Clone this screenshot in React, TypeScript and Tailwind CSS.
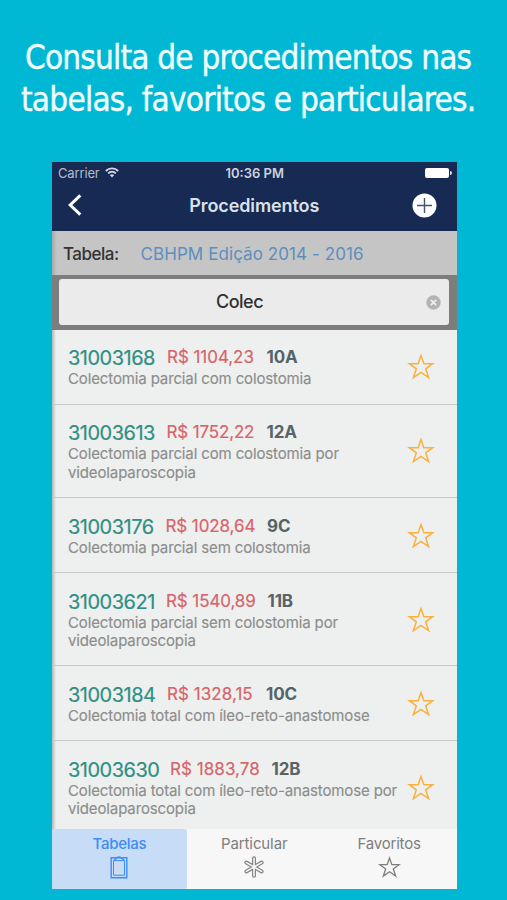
type Procedure = {
  code: string;
  price: string;
  size: string;
  lines: string[];
  height: string;
  codeClass: string;
  priceClass: string;
};

const procedures: Procedure[] = [
  { code: "31003168", price: "R$ 1104,23", size: "10A", lines: ["Colectomia parcial com colostomia"], height: "h-[75px]", codeClass: "w-[99px]", priceClass: "w-[99.5px] tracking-[-0.05px]" },
  { code: "31003613", price: "R$ 1752,22", size: "12A", lines: ["Colectomia parcial com colostomia por", "videolaparoscopia"], height: "h-[93.5px]", codeClass: "w-[98.5px]", priceClass: "w-[100px] tracking-[-0.15px]" },
  { code: "31003176", price: "R$ 1028,64", size: "9C", lines: ["Colectomia parcial sem colostomia"], height: "h-[75px]", codeClass: "w-[97.5px]", priceClass: "w-[101.5px] tracking-[-0.1px]" },
  { code: "31003621", price: "R$ 1540,89", size: "11B", lines: ["Colectomia parcial sem colostomia por", "videolaparoscopia"], height: "h-[93px]", codeClass: "w-[98px]", priceClass: "w-[101.5px] tracking-[-0.1px]" },
  { code: "31003184", price: "R$ 1328,15", size: "10C", lines: ["Colectomia total com íleo-reto-anastomose"], height: "h-[75px]", codeClass: "w-[99px]", priceClass: "w-[99px] tracking-[0.05px]" },
  { code: "31003630", price: "R$ 1883,78", size: "12B", lines: ["Colectomia total com íleo-reto-anastomose por", "videolaparoscopia"], height: "h-[93px]", codeClass: "w-[102px]", priceClass: "w-[101.5px] tracking-[0.05px]" },
];

function Star({ className, stroke = 1.5 }: { className: string; stroke?: number }) {
  return (
    <svg className={className} viewBox="0 0 28 27" fill="none" stroke="currentColor" strokeWidth={stroke} strokeLinejoin="miter">
      <path d="M14 2.4 L16.9 10.7 H25.7 L18.7 15.8 L21.6 24.7 L14 19.4 L6.4 24.7 L9.3 15.8 L2.3 10.7 H11.1 Z" />
    </svg>
  );
}

function StatusBar() {
  return (
    <div className="grid h-[21px] grid-cols-3 items-center pl-[6px] pr-[5px] text-[13px] leading-[20px]">
      <div className="flex items-center gap-[5px] text-[#b4bccb]">
        <span className="tracking-[-0.15px]">Carrier</span>
        <svg className="h-[11px] w-[14px]" viewBox="0 0 14 11" fill="none" stroke="#d5dae3" strokeWidth="1.8">
          <path d="M0.8 4 C4.3 0.6 9.7 0.6 13.2 4" />
          <path d="M3.1 6.3 C5.3 4.2 8.7 4.2 10.9 6.3" />
          <path d="M4.8 8.1 Q7 6.2 9.2 8.1 L7 10.6 Z" fill="#d5dae3" stroke="none" />
        </svg>
      </div>
      <div className="whitespace-nowrap text-center font-semibold tracking-[0px] text-[#ccd2dd]">10:36 PM</div>
      <div className="flex items-center justify-end gap-px">
        <span className="h-[10px] w-[24px] rounded-[2px] bg-white" />
        <span className="h-[4px] w-[2px] rounded-r-full bg-[#dfe4ec]" />
      </div>
    </div>
  );
}

function NavBar() {
  return (
    <div className="grid h-[48px] grid-cols-[1fr_auto_1fr] items-center pl-[15px] pr-[20px] pb-[4px]">
      <svg className="h-[24px] w-[16px]" viewBox="0 0 16 24" fill="none" stroke="#fff" strokeWidth="3">
        <path d="M13.3 2.3 L3.2 12 L13.3 21.7" />
      </svg>
      <h2 className="pl-[5px] text-[18px] font-semibold tracking-[-0.1px] text-[#dbe1ea]">Procedimentos</h2>
      <svg className="h-[25px] w-[25px] justify-self-end" viewBox="0 0 25 25">
        <circle cx="12.5" cy="12.5" r="12" fill="#fff" />
        <path d="M12.5 5 V20 M5 12.5 H20" stroke="#475271" strokeWidth="1.4" />
      </svg>
    </div>
  );
}

function Tabs() {
  return (
    <nav className="grid h-[59.5px] grid-cols-3 bg-[#f7f7f7] text-[15px] leading-[20px] text-[#7e7e7e]">
      <div className="flex flex-col items-center rounded-r-[3px] bg-[#c6dcf7] pt-[5px] text-[#3c8df5]">
        <span className="font-medium tracking-[-0.25px]">Tabelas</span>
        <svg className="mt-[2px] h-[23px] w-[18px]" viewBox="0 0 18 23" fill="none" stroke="currentColor" strokeWidth="1.4">
          <path d="M1.2 1.8 H16.8 V21.8 H1.2 Z" />
          <path d="M3.5 4.6 H14.5 V19.2 H3.5 Z" strokeWidth="1" />
          <path d="M4 5 C4 3 6 3.4 6.6 2.2 C7.2 0.4 10.8 0.4 11.4 2.2 C12 3.4 14 3 14 5" strokeWidth="1.2" />
        </svg>
      </div>
      <div className="flex flex-col items-center pt-[5px]">
        <span className="tracking-[-0.1px]">Particular</span>
        <svg className="mt-[2px] h-[22px] w-[22px]" viewBox="0 0 22 22" strokeLinecap="round">
          <path d="M11 2.3 V19.7 M3.4 6.6 L18.6 15.4 M3.4 15.4 L18.6 6.6" stroke="#858585" strokeWidth="4" />
          <path d="M11 2.3 V19.7 M3.4 6.6 L18.6 15.4 M3.4 15.4 L18.6 6.6" stroke="#f7f7f7" strokeWidth="1.6" />
        </svg>
      </div>
      <div className="flex flex-col items-center pt-[5px]">
        <span className="tracking-[-0.2px]">Favoritos</span>
        <Star className="mt-[2px] h-[22px] w-[23px]" stroke={1.6} />
      </div>
    </nav>
  );
}

export default function App() {
  return (
    <main className="flex h-[900px] w-[507px] flex-col overflow-hidden bg-[#00b8d3] pt-[37px] font-['Inter','Liberation_Sans',sans-serif]">
      <h1 className="h-[125px] whitespace-nowrap font-['DejaVu_Sans_Condensed','DejaVu_Sans',sans-serif] text-[33px] leading-[42px] text-[#effcfe] [-webkit-text-stroke:0.4px_#effcfe] [font-stretch:condensed]">
        <span className="block pl-[25px] tracking-[-0.8px]">Consulta de procedimentos nas</span>
        <span className="block pl-[21px] tracking-[-0.76px]">tabelas, favoritos e particulares.</span>
      </h1>
      <section className="ml-[52px] flex h-[726.5px] w-[404.5px] flex-col overflow-hidden bg-[#eef0ef]">
        <header className="h-[69px] shrink-0 bg-[#162a53]">
          <StatusBar />
          <NavBar />
        </header>
        <div className="flex h-[44px] shrink-0 items-center bg-gradient-to-r from-[#a9a9a9] via-[#c5c5c5] via-[1.2%] to-[#c5c5c5] pl-[11px] pt-[3px] text-[17px]">
          <span className="w-[77.5px] font-medium tracking-[-0.5px] text-[#333]">Tabela:</span>
          <span className="tracking-[0.08px] text-[#5b8fbf]">CBHPM Edição 2014 - 2016</span>
        </div>
        <div className="h-[54.5px] shrink-0 bg-[#7d7d7d] pl-[7px] pr-[7.5px] pt-[4px]">
          <div className="grid h-[46px] grid-cols-[1fr_auto_1fr] items-center rounded-[3px] bg-[#ebebeb] pr-[8px]">
            <span />
            <span className="pb-[2px] pr-[21px] text-[18px] font-medium tracking-[-0.5px] text-[#303030]">Colec</span>
            <svg className="h-[15px] w-[15px] justify-self-end" viewBox="0 0 15 15">
              <circle cx="7.5" cy="7.5" r="7.2" fill="#b3b3b3" />
              <path d="M4.8 4.8 L10.2 10.2 M10.2 4.8 L4.8 10.2" stroke="#ededed" strokeWidth="1.8" />
            </svg>
          </div>
        </div>
        <div className="flex h-[499.5px] shrink-0 flex-col overflow-hidden bg-gradient-to-r from-[#b5b8b7] via-[#eef0ef] via-[1%] to-[#eef0ef]">
          {procedures.map((p) => (
            <article key={p.code} className={`flex shrink-0 items-center justify-between border-b border-[#c6c8c7] pl-[16px] pr-[22px] ${p.height}`}>
              <div className="flex h-full w-[336px] flex-col whitespace-nowrap pt-[17.5px]">
                <div className="flex h-[23px] leading-[23px]">
                  <span className={`text-[20px] tracking-[-0.5px] text-[#2f8f83] [-webkit-text-stroke:0.2px_#2f8f83] ${p.codeClass}`}>{p.code}</span>
                  <span className={`-mt-[1px] text-[17px] text-[#d7646a] [-webkit-text-stroke:0.2px_#d7646a] ${p.priceClass}`}>{p.price}</span>
                  <span className="-mt-[1px] text-[17px] font-bold tracking-[-0.15px] text-[#566367]">{p.size}</span>
                </div>
                {p.lines.map((line) => (
                  <p key={line} className="text-[15px] leading-[18.6px] tracking-[-0.13px] text-[#8c8d8c] [-webkit-text-stroke:0.15px_#8c8d8c]">{line}</p>
                ))}
              </div>
              <Star className="h-[27px] w-[28px] shrink-0 text-[#fbb040]" />
            </article>
          ))}
        </div>
        <Tabs />
      </section>
    </main>
  );
}
